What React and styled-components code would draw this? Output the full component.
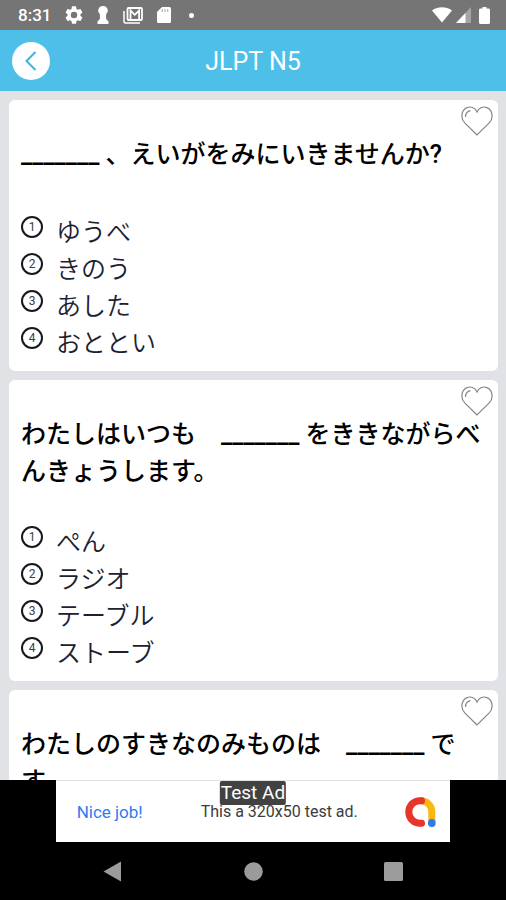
import React, { useState } from 'react'
import styled, { createGlobalStyle } from 'styled-components'

const questions = [
  {
    text: '_______ 、えいがをみにいきませんか?',
    choices: ['ゆうべ', 'きのう', 'あした', 'おととい'],
  },
  {
    text: 'わたしはいつも　_______ をききながらべんきょうします。',
    choices: ['ぺん', 'ラジオ', 'テーブル', 'ストーブ'],
  },
  {
    text: 'わたしのすきなのみものは　_______ です。',
    choices: [],
  },
]

function StatusBar() {
  return (
    <Status>
      <Clock>8:31</Clock>
      <StatusIcons>
        <svg width="18" height="18" viewBox="2 2 20 20" fill="#fff">
          <path d="M19.14 12.94c.04-.3.06-.61.06-.94 0-.32-.02-.64-.07-.94l2.03-1.58a.49.49 0 0 0 .12-.61l-1.92-3.32a.49.49 0 0 0-.59-.22l-2.39.96c-.5-.38-1.03-.7-1.62-.94l-.36-2.54a.48.48 0 0 0-.48-.41h-3.84a.48.48 0 0 0-.47.41l-.36 2.54c-.59.24-1.13.57-1.62.94l-2.39-.96a.49.49 0 0 0-.59.22L2.74 8.87a.48.48 0 0 0 .12.61l2.03 1.58c-.05.3-.09.63-.09.94s.02.64.07.94l-2.03 1.58a.49.49 0 0 0-.12.61l1.92 3.32c.12.22.37.29.59.22l2.39-.96c.5.38 1.03.7 1.62.94l.36 2.54c.05.24.24.41.48.41h3.84c.24 0 .44-.17.47-.41l.36-2.54c.59-.24 1.13-.56 1.62-.94l2.39.96c.22.08.47 0 .59-.22l1.92-3.32a.48.48 0 0 0-.12-.61zM12 15.6a3.6 3.6 0 1 1 0-7.2 3.6 3.6 0 0 1 0 7.2z" />
        </svg>
        <svg width="12" height="18" viewBox="0 0 12 18" fill="#fff">
          <path d="M6 0C3.200 0 1.200 2 1.200 4.500c0 1.600.7 2.700 1.700 3.500v5L.5 15.500V18h11v-2.500L9.100 13V8c1-.8 1.700-1.900 1.700-3.500C10.800 2 8.800 0 6 0z" />
        </svg>
        <svg width="20" height="17" viewBox="0 0 20 17" fill="none" stroke="#fff">
          <path d="M1 4v10.500Q1 16 2.500 16H17" strokeWidth="1.500" />
          <rect x="4.500" y="1" width="14.500" height="12" rx="1" strokeWidth="1.800" />
          <path d="M7.500 12V3.500l4.300 4.300 4.300-4.300V12" strokeWidth="1.800" />
        </svg>
        <svg width="14" height="16" viewBox="0 0 14 16">
          <path d="M5 0h7.500Q14 0 14 1.500v13q0 1.500-1.500 1.500h-11Q0 16 0 14.500V5z" fill="#fff" />
          <path d="M5.300 2v3M8 2v3M10.700 2v3" stroke="#b5b5b5" strokeWidth="1.200" />
        </svg>
        <Dot />
      </StatusIcons>
      <Signals>
        <svg width="20" height="16" viewBox="0 0 20 16" fill="#fff">
          <path d="M0 3.500C6-.8 14-.8 20 3.500L10 15.500z" />
        </svg>
        <svg width="15" height="16" viewBox="0 0 15 16" fill="#fff">
          <path d="M15 0v16H0z" opacity=".35" />
          <path d="M9.500 5.900V16H0z" />
        </svg>
        <svg width="11" height="17" viewBox="0 0 11 17" fill="#fff">
          <path d="M3.500 0h4v1.600h2Q11 1.600 11 3v12.500Q11 17 9.500 17h-8Q0 17 0 15.500V3q0-1.400 1.500-1.400h2z" />
        </svg>
      </Signals>
    </Status>
  )
}

function Heart({ filled }) {
  return (
    <svg width="32" height="30" viewBox="0 0 32 30" fill={filled ? '#f2899a' : 'none'} stroke="#858585" strokeWidth="1.200">
      <path d="M16 29L4 17.200C-.8 12.200.2 4.600 5.500 1.900 9.500-.1 14 1.400 16 6c2-4.600 6.500-6.100 10.500-4.100 5.300 2.700 6.300 10.300 1.500 15.300z" />
      <path d="M4.600 11C4.200 8 6.200 5 9.400 4.600" />
    </svg>
  )
}

function QuestionCard({ text, choices }) {
  const [liked, setLiked] = useState(false)
  return (
    <Card>
      <LikeButton aria-label="favorite" aria-pressed={liked} onClick={() => setLiked(!liked)}>
        <Heart filled={liked} />
      </LikeButton>
      <Question>{text}</Question>
      <Choices>
        {choices.map((choice, index) => (
          <li key={choice}>
            <Choice type="button">
              <Circle>{index + 1}</Circle>
              {choice}
            </Choice>
          </li>
        ))}
      </Choices>
    </Card>
  )
}

function AdBanner() {
  return (
    <AdRow>
      <Ad href="#">
        <AdTag>Test Ad</AdTag>
        <AdTitle>Nice job!</AdTitle>
        <AdText>This a 320x50 test ad.</AdText>
        <svg width="31" height="30" viewBox="0 0 31 30" fill="none" strokeLinecap="round" strokeWidth="7">
          <path d="M16.500 3.700A11 11 0 0 1 26.800 15v8" stroke="#fbb813" />
          <path d="M16.500 3.800C9 3 3.800 8.500 3.800 15c0 6.800 5.500 12 12.700 11.300" stroke="#e7352c" />
          <circle cx="26.800" cy="26" r="3.900" fill="#2d7bee" />
        </svg>
      </Ad>
    </AdRow>
  )
}

function App() {
  return (
    <Screen>
      <GlobalStyle />
      <StatusBar />
      <Header>
        <BackButton aria-label="back">
          <svg width="12" height="20" viewBox="0 0 12 20" fill="none" stroke="#3fb4de" strokeWidth="2">
            <path d="M10.500 1L1.500 10l9 9" />
          </svg>
        </BackButton>
        <Title>JLPT N5</Title>
      </Header>
      <List>
        {questions.map((q) => (
          <QuestionCard key={q.text} text={q.text} choices={q.choices} />
        ))}
      </List>
      <AdBanner />
      <NavBar>
        <NavButton aria-label="previous screen">
          <svg width="19" height="21" viewBox="0 0 19 21" fill="#9b9b9b">
            <path d="M18 .5v20L.5 10.500z" />
          </svg>
        </NavButton>
        <NavButton aria-label="home">
          <svg width="19" height="19" viewBox="0 0 19 19" fill="#9b9b9b">
            <circle cx="9.500" cy="9.500" r="9.300" />
          </svg>
        </NavButton>
        <NavButton aria-label="recent apps">
          <svg width="19" height="19" viewBox="0 0 19 19" fill="#9b9b9b">
            <rect width="19" height="19" rx="1.500" />
          </svg>
        </NavButton>
      </NavBar>
    </Screen>
  )
}

export default App

const GlobalStyle = createGlobalStyle`
*{
    box-sizing:border-box;
}
body{
    margin:0;
    font-family:Roboto, "Noto Sans CJK JP", sans-serif;
}
button{
    padding:0;
    border:0;
    background:none;
    font:inherit;
    color:inherit;
    cursor:pointer;
}
svg{
    display:block;
}
`
const Screen = styled.div`
display:flex;
flex-direction:column;
height:100vh;
background:#e1e2e6;
`
const Status = styled.div`
display:flex;
align-items:center;
flex:none;
height:30px;
padding:0 16px 0 18px;
background:#757575;
color:#fff;
`
const Clock = styled.span`
font-size:17px;
font-weight:500;
line-height:32px;
`
const StatusIcons = styled.div`
display:flex;
align-items:center;
gap:14px;
flex:1;
margin-left:14px;
`
const Dot = styled.span`
width:5px;
height:5px;
margin-left:4px;
border-radius:50%;
background:#fff;
`
const Signals = styled.div`
display:flex;
align-items:center;
gap:4px;
svg:last-child{
    margin-left:4px;
}
`
const Header = styled.header`
display:grid;
grid-template-columns:38px 1fr 38px;
align-items:center;
flex:none;
height:61px;
padding:0 12px;
background:#4dbfe8;
`
const BackButton = styled.button`
display:flex;
align-items:center;
justify-content:center;
width:38px;
height:38px;
border-radius:50%;
&&{
    background:#fff;
}
`
const Title = styled.h1`
margin:0;
padding-top:3px;
color:#fff;
font-size:25px;
font-weight:400;
line-height:30px;
text-align:center;
`
const List = styled.main`
display:flex;
flex-direction:column;
gap:9px;
flex:1;
min-height:0;
padding:9px 8px 9px 9px;
overflow-y:auto;
scrollbar-width:none;
`
const Card = styled.section`
position:relative;
flex:none;
padding:36px 12px 9px;
border-radius:6px;
background:#fff;
`
const LikeButton = styled.button`
position:absolute;
top:6px;
right:5px;
`
const Question = styled.h2`
min-height:44px;
margin:0 0 34px;
color:#000;
font-size:25px;
font-weight:500;
line-height:37px;
`
const Choices = styled.ol`
margin:0;
padding:0;
list-style:none;
`
const Choice = styled.button`
display:flex;
gap:13px;
width:100%;
&&{
    color:#1b2130;
    font-size:25px;
    font-weight:350;
    line-height:37px;
}
`
const Circle = styled.span`
width:22px;
height:22px;
margin-top:2px;
border:2px solid #16181d;
border-radius:50%;
color:#3a3d45;
font-size:12px;
font-weight:400;
line-height:18px;
text-align:center;
`
const AdRow = styled.aside`
display:flex;
justify-content:center;
flex:none;
background:#000;
`
const Ad = styled.a`
position:relative;
display:grid;
grid-template-columns:124px 1fr auto;
align-items:center;
width:78%;
height:62px;
padding:0 14px 0 21px;
border-top:1px solid #dfe1e3;
background:#fff;
text-decoration:none;
`
const AdTag = styled.span`
position:absolute;
top:0;
left:50%;
transform:translateX(-50%);
padding:0 1px;
border-radius:2px;
background:#424242;
color:#fff;
font-size:19px;
line-height:24px;
white-space:nowrap;
`
const AdTitle = styled.span`
color:#2f7bf0;
font-size:17px;
line-height:20px;
`
const AdText = styled.span`
color:#3c3c3c;
font-size:16px;
line-height:20px;
`
const NavBar = styled.nav`
display:flex;
flex:none;
height:58px;
padding:0 42px;
background:#000;
`
const NavButton = styled.button`
display:flex;
align-items:center;
justify-content:center;
flex:1;
`
